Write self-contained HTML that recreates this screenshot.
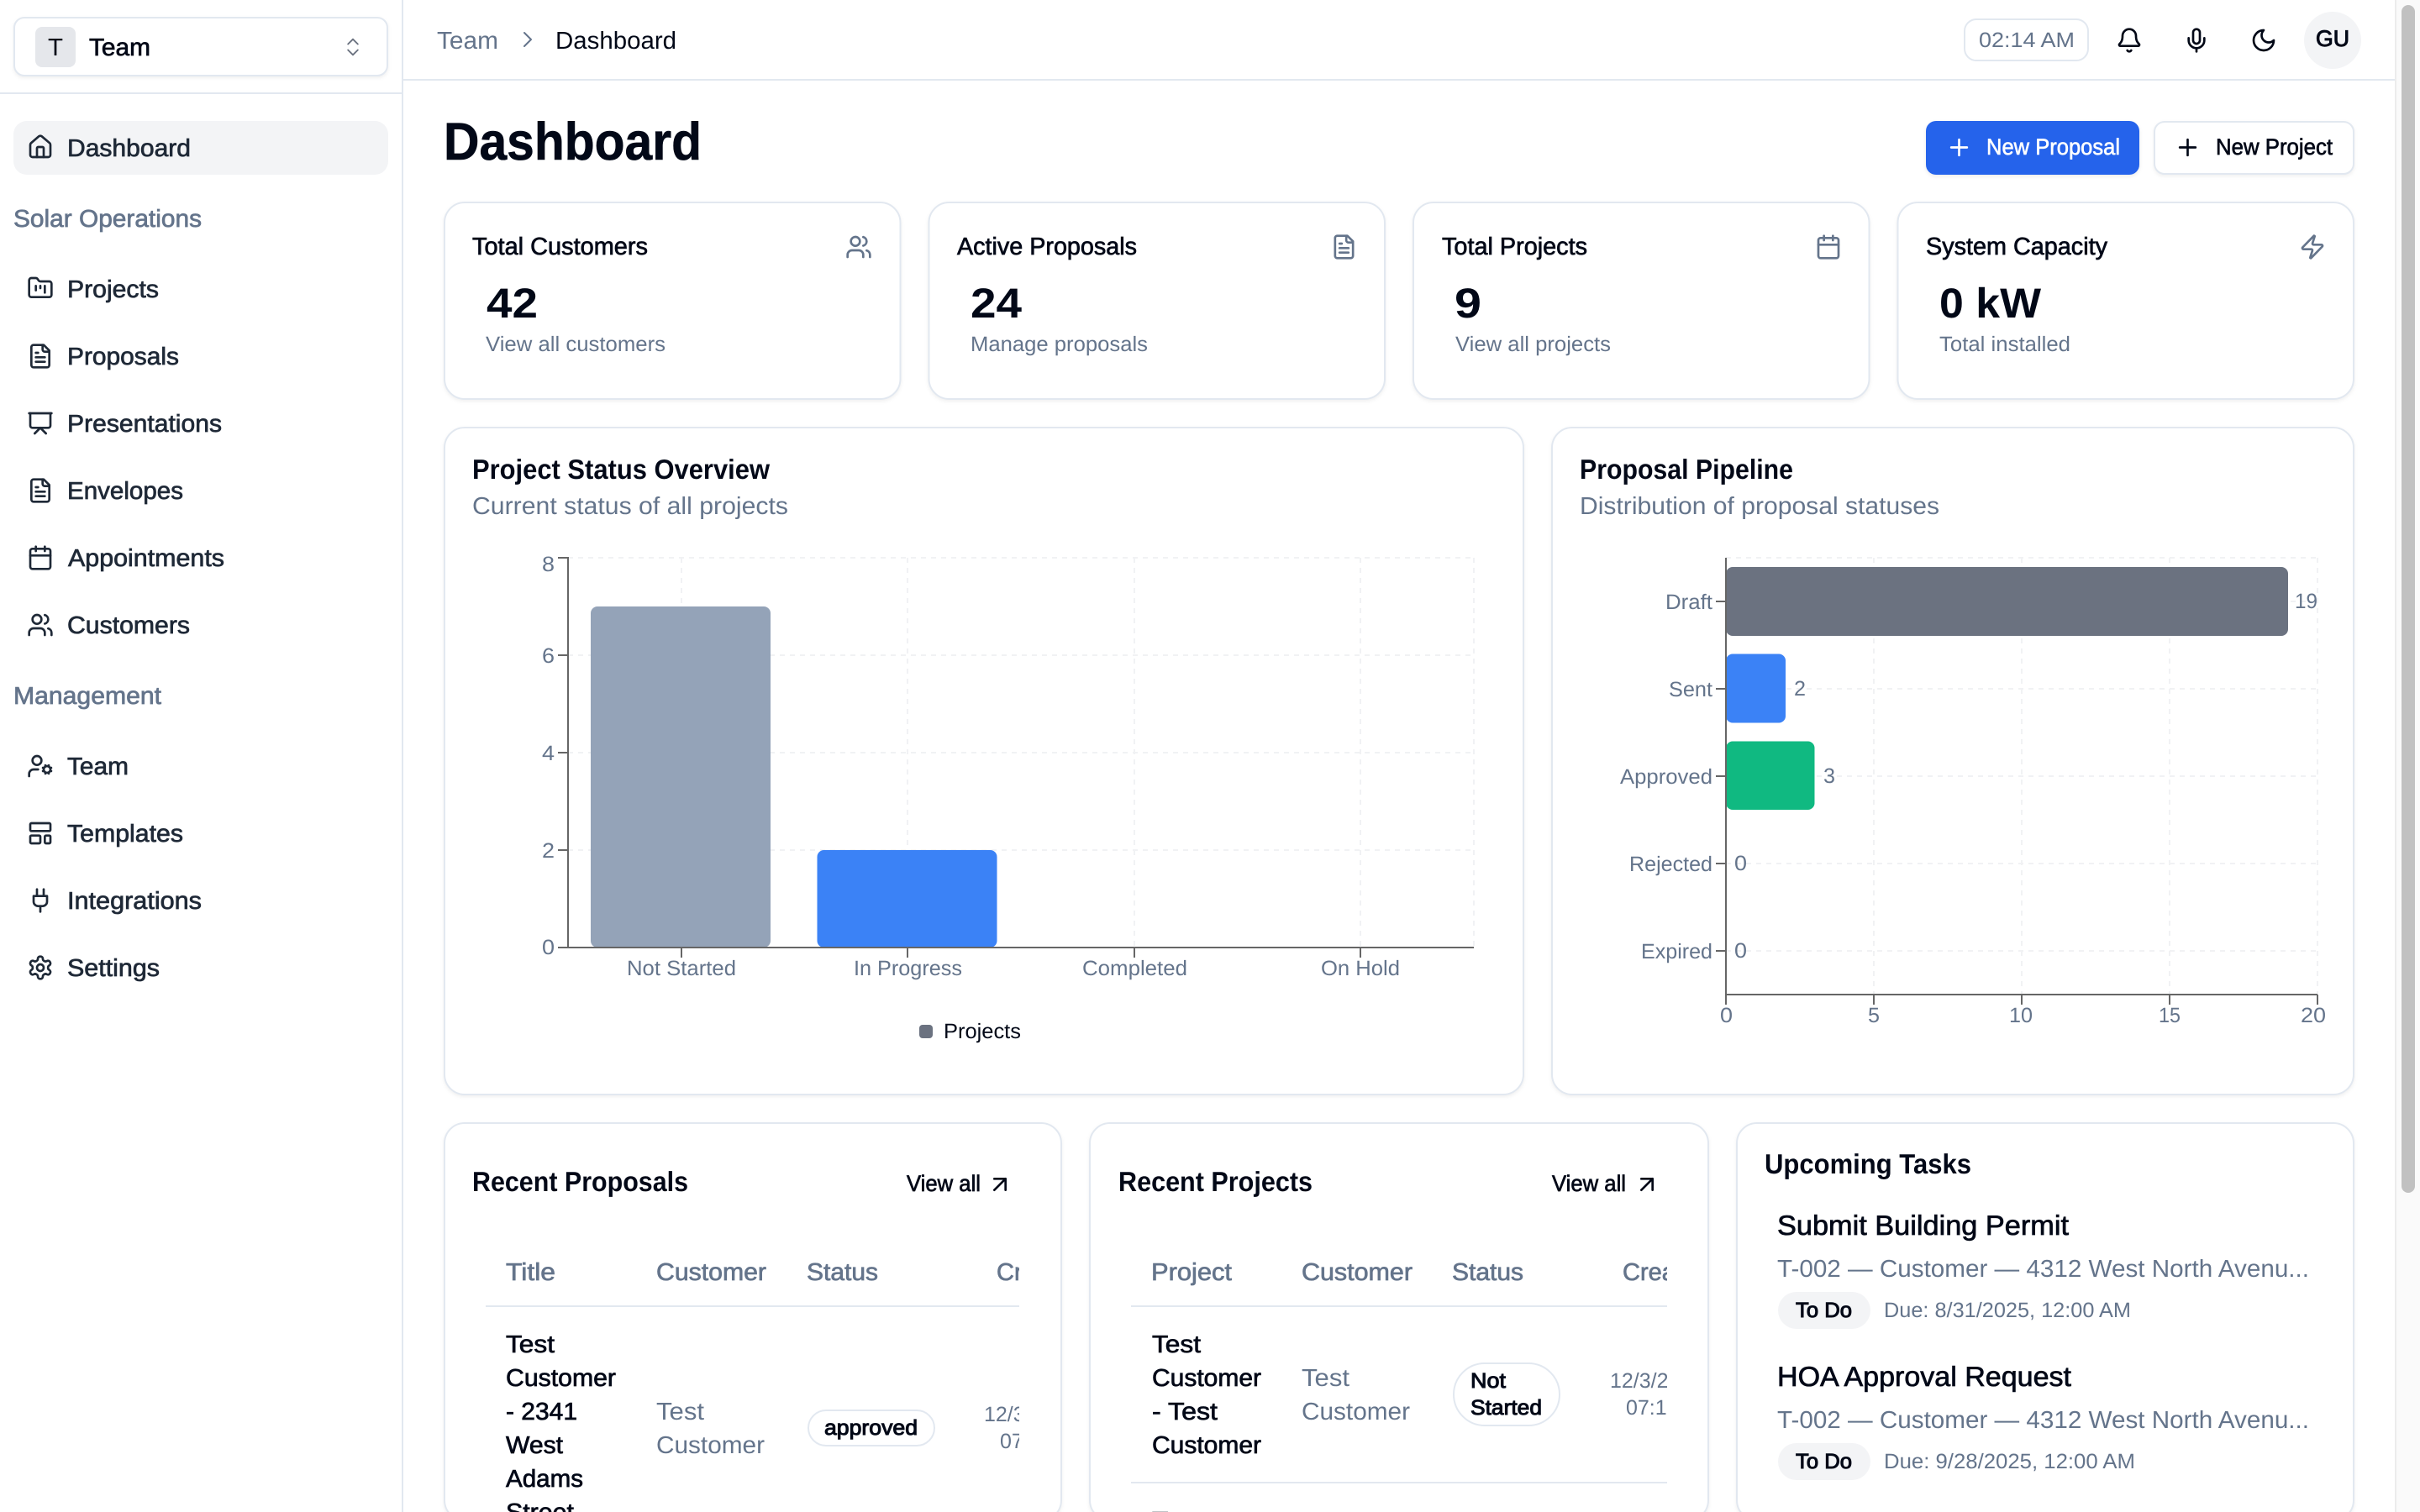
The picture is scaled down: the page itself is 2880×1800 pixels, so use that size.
<!DOCTYPE html>
<html lang="en"><head><meta charset="utf-8"><title>Dashboard</title>
<style>
html,body{margin:0;padding:0;background:#fff;width:2880px;height:1800px;overflow:hidden}
svg{display:block}
text{font-family:"Liberation Sans",sans-serif;text-rendering:geometricPrecision;white-space:pre}
.d{fill:#020817}.g{fill:#64748b}.n{fill:#1f2937}.w{fill:#fff}
.dm{fill:#020817;stroke:#020817;stroke-width:.7}
.ds{fill:#020817;stroke:#020817;stroke-width:1}
.gm{fill:#64748b;stroke:#64748b;stroke-width:.7}
.nm{fill:#1f2937;stroke:#1f2937;stroke-width:.7}
.wm{fill:#fff;stroke:#fff;stroke-width:.6}
.b{font-weight:700}
.s29{font-size:29px}.s25{font-size:25px}.s27{font-size:27px}.s33{font-size:33px}.s50{font-size:50px;font-weight:700}
.card{fill:#fff;stroke:#e2e8f0;stroke-width:2;filter:drop-shadow(0 2px 2px rgba(0,0,0,.06))}
.ln{fill:#e2e8f0}
.ax{stroke:#666;stroke-width:2;fill:none}
.gr{stroke:#f1f2f4;stroke-width:2;stroke-dasharray:6 6;fill:none}
.i{fill:none;stroke-linecap:round;stroke-linejoin:round;stroke-width:2}
.in{stroke:#1f2937;color:#1f2937}.ig{stroke:#64748b}.id{stroke:#020817}.iw{stroke:#fff}
</style></head><body>
<svg xmlns="http://www.w3.org/2000/svg" width="2880" height="1800" viewBox="0 0 2880 1800">
<defs>
<symbol id="home" viewBox="0 0 24 24"><path d="M15 21v-8a1 1 0 0 0-1-1h-4a1 1 0 0 0-1 1v8"/><path d="M3 10a2 2 0 0 1 .709-1.528l7-5.999a2 2 0 0 1 2.582 0l7 5.999A2 2 0 0 1 21 10v9a2 2 0 0 1-2 2H5a2 2 0 0 1-2-2z"/></symbol>
<symbol id="kanban" viewBox="0 0 24 24"><path d="M4 20h16a2 2 0 0 0 2-2V8a2 2 0 0 0-2-2h-7.930a2 2 0 0 1-1.660-.9l-.82-1.200A2 2 0 0 0 7.930 3H4a2 2 0 0 0-2 2v13c0 1.100.9 2 2 2Z"/><path d="M8 10v4"/><path d="M12 10v2"/><path d="M16 10v6"/></symbol>
<symbol id="file" viewBox="0 0 24 24"><path d="M15 2H6a2 2 0 0 0-2 2v16a2 2 0 0 0 2 2h12a2 2 0 0 0 2-2V7Z"/><path d="M14 2v4a2 2 0 0 0 2 2h4"/><path d="M10 9H8"/><path d="M16 13H8"/><path d="M16 17H8"/></symbol>
<symbol id="pres" viewBox="0 0 24 24"><path d="M2 3h20"/><path d="M21 3v11a2 2 0 0 1-2 2H5a2 2 0 0 1-2-2V3"/><path d="m7 21 5-5 5 5"/></symbol>
<symbol id="cal" viewBox="0 0 24 24"><path d="M8 2v4"/><path d="M16 2v4"/><rect width="18" height="18" x="3" y="4" rx="2"/><path d="M3 10h18"/></symbol>
<symbol id="users" viewBox="0 0 24 24"><path d="M16 21v-2a4 4 0 0 0-4-4H6a4 4 0 0 0-4 4v2"/><path d="M16 3.128a4 4 0 0 1 0 7.744"/><path d="M22 21v-2a4 4 0 0 0-3-3.870"/><circle cx="9" cy="7" r="4"/></symbol>
<symbol id="ucog" viewBox="0 0 24 24"><path d="M10 15H6a4 4 0 0 0-4 4v2"/><path d="m14.305 16.530.923-.382"/><path d="m15.228 13.852-.923-.383"/><path d="m16.852 12.228-.383-.923"/><path d="m16.852 17.772-.383.924"/><path d="m19.148 12.228.383-.923"/><path d="m19.530 18.696-.382-.924"/><path d="m20.772 13.852.924-.383"/><path d="m20.772 16.148.924.383"/><circle cx="18" cy="15" r="3"/><circle cx="9" cy="7" r="4"/></symbol>
<symbol id="tmpl" viewBox="0 0 24 24"><rect width="18" height="7" x="3" y="3" rx="1"/><rect width="9" height="7" x="3" y="14" rx="1"/><rect width="5" height="7" x="16" y="14" rx="1"/></symbol>
<symbol id="plug" viewBox="0 0 24 24"><path d="M12 22v-5"/><path d="M9 8V2"/><path d="M15 8V2"/><path d="M18 8v5a4 4 0 0 1-4 4h-4a4 4 0 0 1-4-4V8Z"/></symbol>
<symbol id="gear" viewBox="0 0 24 24"><path d="M12.220 2h-.44a2 2 0 0 0-2 2v.18a2 2 0 0 1-1 1.730l-.43.25a2 2 0 0 1-2 0l-.15-.08a2 2 0 0 0-2.730.73l-.22.38a2 2 0 0 0 .73 2.730l.15.1a2 2 0 0 1 1 1.720v.51a2 2 0 0 1-1 1.740l-.15.09a2 2 0 0 0-.73 2.730l.22.38a2 2 0 0 0 2.730.73l.15-.08a2 2 0 0 1 2 0l.43.25a2 2 0 0 1 1 1.730V20a2 2 0 0 0 2 2h.44a2 2 0 0 0 2-2v-.18a2 2 0 0 1 1-1.730l.43-.25a2 2 0 0 1 2 0l.15.08a2 2 0 0 0 2.730-.73l.22-.39a2 2 0 0 0-.73-2.730l-.15-.08a2 2 0 0 1-1-1.740v-.5a2 2 0 0 1 1-1.740l.15-.09a2 2 0 0 0 .73-2.730l-.22-.38a2 2 0 0 0-2.730-.73l-.15.08a2 2 0 0 1-2 0l-.43-.25a2 2 0 0 1-1-1.730V4a2 2 0 0 0-2-2z"/><circle cx="12" cy="12" r="3"/></symbol>
<symbol id="bell" viewBox="0 0 24 24"><path d="M10.268 21a2 2 0 0 0 3.464 0"/><path d="M3.262 15.326A1 1 0 0 0 4 17h16a1 1 0 0 0 .74-1.673C19.410 13.956 18 12.499 18 8A6 6 0 0 0 6 8c0 4.499-1.411 5.956-2.738 7.326"/></symbol>
<symbol id="mic" viewBox="0 0 24 24"><path d="M12 19v3"/><path d="M19 10v2a7 7 0 0 1-14 0v-2"/><rect x="9" y="2" width="6" height="13" rx="3"/></symbol>
<symbol id="moon" viewBox="0 0 24 24"><path d="M12 3a6 6 0 0 0 9 9 9 9 0 1 1-9-9Z"/></symbol>
<symbol id="zap" viewBox="0 0 24 24"><path d="M4 14a1 1 0 0 1-.78-1.630l9.900-10.200a.5.5 0 0 1 .86.46l-1.920 6.020A1 1 0 0 0 13 10h7a1 1 0 0 1 .78 1.630l-9.900 10.200a.5.5 0 0 1-.86-.46l1.920-6.020A1 1 0 0 0 11 14z"/></symbol>
<symbol id="plus" viewBox="0 0 24 24"><path d="M5 12h14"/><path d="M12 5v14"/></symbol>
<symbol id="aur" viewBox="0 0 24 24"><path d="M7 7h10v10"/><path d="M7 17 17 7"/></symbol>
<symbol id="chr" viewBox="0 0 24 24"><path d="m9 18 6-6-6-6"/></symbol>
<symbol id="chud" viewBox="0 0 24 24"><path d="m7 15 5 5 5-5"/><path d="m7 9 5-5 5 5"/></symbol>
<clipPath id="c1"><rect x="578" y="1490" width="635" height="310"/></clipPath>
<clipPath id="c2"><rect x="1346" y="1490" width="638" height="310"/></clipPath>
</defs>

<!-- scrollbar -->
<rect x="2850" y="0" width="30" height="1800" fill="#fafafa"/>
<rect x="2850" y="0" width="2" height="1800" fill="#ececec"/>
<rect x="2858" y="6" width="16" height="1414" rx="8" fill="#c1c1c1"/>

<!-- sidebar -->
<rect x="478" y="0" width="2" height="1800" fill="#e2e8f0"/>
<rect x="0" y="110" width="478" height="2" fill="#e2e8f0"/>
<rect class="card" x="17" y="21" width="444" height="69" rx="12"/>
<rect x="42" y="32" width="48" height="48" rx="8" fill="#e5e7eb"/>
<text class="s29 d" x="57" y="66" textLength="18" lengthAdjust="spacingAndGlyphs">T</text>
<text class="s29 dm" x="106" y="66" textLength="73" lengthAdjust="spacingAndGlyphs">Team</text>
<use href="#chud" x="406" y="42" width="28" height="28" class="i" stroke="#6b7280" style="stroke-width:1.600"/>

<rect x="16" y="144" width="446" height="64" rx="16" fill="#f3f4f6"/>
<use href="#home" x="32" y="159" width="32" height="32" class="i in"/>
<text class="s29 nm" x="80" y="186" textLength="147" lengthAdjust="spacingAndGlyphs">Dashboard</text>
<text class="s29 gm" x="16" y="270" textLength="224" lengthAdjust="spacingAndGlyphs">Solar Operations</text>

<use href="#kanban" x="32" y="327" width="32" height="32" class="i in"/>
<text class="s29 nm" x="80" y="354" textLength="109" lengthAdjust="spacingAndGlyphs">Projects</text>
<use href="#file" x="32" y="408" width="32" height="32" class="i in"/>
<text class="s29 nm" x="80" y="434" textLength="133" lengthAdjust="spacingAndGlyphs">Proposals</text>
<use href="#pres" x="32" y="488" width="32" height="32" class="i in"/>
<text class="s29 nm" x="80" y="514" textLength="184" lengthAdjust="spacingAndGlyphs">Presentations</text>
<use href="#file" x="32" y="568" width="32" height="32" class="i in"/>
<text class="s29 nm" x="80" y="594" textLength="138" lengthAdjust="spacingAndGlyphs">Envelopes</text>
<use href="#cal" x="32" y="648" width="32" height="32" class="i in"/>
<text class="s29 nm" x="81" y="674" textLength="186" lengthAdjust="spacingAndGlyphs">Appointments</text>
<use href="#users" x="32" y="728" width="32" height="32" class="i in"/>
<text class="s29 nm" x="80" y="754" textLength="146" lengthAdjust="spacingAndGlyphs">Customers</text>
<text class="s29 gm" x="16" y="838" textLength="176" lengthAdjust="spacingAndGlyphs">Management</text>
<use href="#ucog" x="32" y="896" width="32" height="32" class="i in"/>
<text class="s29 nm" x="80" y="922" textLength="73" lengthAdjust="spacingAndGlyphs">Team</text>
<use href="#tmpl" x="32" y="976" width="32" height="32" class="i in"/>
<text class="s29 nm" x="80" y="1002" textLength="138" lengthAdjust="spacingAndGlyphs">Templates</text>
<use href="#plug" x="32" y="1056" width="32" height="32" class="i in"/>
<text class="s29 nm" x="80" y="1082" textLength="160" lengthAdjust="spacingAndGlyphs">Integrations</text>
<use href="#gear" x="32" y="1136" width="32" height="32" class="i in"/>
<text class="s29 nm" x="80" y="1162" textLength="110" lengthAdjust="spacingAndGlyphs">Settings</text>

<!-- header -->
<rect x="480" y="94" width="2370" height="2" fill="#e2e8f0"/>
<text class="s29 g" x="520" y="58" textLength="73" lengthAdjust="spacingAndGlyphs">Team</text>
<use href="#chr" x="612" y="31" width="32" height="32" class="i ig" style="stroke-width:1.500"/>
<text class="s29 d" x="661" y="58" textLength="144" lengthAdjust="spacingAndGlyphs">Dashboard</text>
<rect x="2338" y="23" width="147" height="49" rx="14" fill="#fff" stroke="#e2e8f0" stroke-width="2"/>
<text class="s25 g" x="2355" y="56" textLength="114" lengthAdjust="spacingAndGlyphs">02:14 AM</text>
<use href="#bell" x="2518" y="32" width="32" height="32" class="i id"/>
<use href="#mic" x="2598" y="32" width="32" height="32" class="i id"/>
<use href="#moon" x="2678" y="32" width="32" height="32" class="i id"/>
<circle cx="2776" cy="48" r="34" fill="#f3f4f6"/>
<text class="s27 ds" x="2756" y="55" textLength="40" lengthAdjust="spacingAndGlyphs">GU</text>

<!-- title row -->
<text class="d b" font-size="63" x="528" y="190" textLength="307" lengthAdjust="spacingAndGlyphs" stroke="#020817" stroke-width=".6">Dashboard</text>
<rect x="2292" y="144" width="254" height="64" rx="12" fill="#2563eb" style="filter:drop-shadow(0 2px 2px rgba(0,0,0,.08))"/>
<use href="#plus" x="2315.500" y="159.500" width="32" height="32" class="i iw"/>
<text class="s27 wm" x="2364" y="184" textLength="159" lengthAdjust="spacingAndGlyphs">New Proposal</text>
<rect class="card" x="2564" y="145" width="237" height="62" rx="12"/>
<use href="#plus" x="2587.500" y="159.500" width="32" height="32" class="i id"/>
<text class="s27 dm" x="2637" y="184" textLength="139" lengthAdjust="spacingAndGlyphs">New Project</text>

<!-- stat cards -->
<rect class="card" x="529" y="241" width="542.500" height="234" rx="24"/>
<text class="s29 dm" x="562" y="303" textLength="209" lengthAdjust="spacingAndGlyphs">Total Customers</text>
<use href="#users" x="1006" y="278" width="32" height="32" class="i ig"/>
<text class="s50 d" x="579" y="378" textLength="61" lengthAdjust="spacingAndGlyphs">42</text>
<text class="s25 g" x="578" y="418" textLength="214" lengthAdjust="spacingAndGlyphs">View all customers</text>

<rect class="card" x="1105.500" y="241" width="542.500" height="234" rx="24"/>
<text class="s29 dm" x="1139" y="303" textLength="214" lengthAdjust="spacingAndGlyphs">Active Proposals</text>
<use href="#file" x="1583.500" y="278" width="32" height="32" class="i ig"/>
<text class="s50 d" x="1155" y="378" textLength="61" lengthAdjust="spacingAndGlyphs">24</text>
<text class="s25 g" x="1155" y="418" textLength="211" lengthAdjust="spacingAndGlyphs">Manage proposals</text>

<rect class="card" x="1682" y="241" width="542.500" height="234" rx="24"/>
<text class="s29 dm" x="1716" y="303" textLength="173" lengthAdjust="spacingAndGlyphs">Total Projects</text>
<use href="#cal" x="2160" y="278" width="32" height="32" class="i ig"/>
<text class="s50 d" x="1731" y="378" textLength="32" lengthAdjust="spacingAndGlyphs">9</text>
<text class="s25 g" x="1732" y="418" textLength="185" lengthAdjust="spacingAndGlyphs">View all projects</text>

<rect class="card" x="2258.500" y="241" width="542.500" height="234" rx="24"/>
<text class="s29 dm" x="2292" y="303" textLength="216" lengthAdjust="spacingAndGlyphs">System Capacity</text>
<use href="#zap" x="2736" y="278" width="32" height="32" class="i ig"/>
<text class="s50 d" x="2308" y="378" textLength="121" lengthAdjust="spacingAndGlyphs">0 kW</text>
<text class="s25 g" x="2308" y="418" textLength="156" lengthAdjust="spacingAndGlyphs">Total installed</text>

<!-- chart card 1 -->
<rect class="card" x="529" y="509" width="1284" height="794" rx="24"/>
<text class="s33 d b" x="562" y="570" textLength="354" lengthAdjust="spacingAndGlyphs">Project Status Overview</text>
<text class="s29 g" x="562" y="612" textLength="376" lengthAdjust="spacingAndGlyphs">Current status of all projects</text>
<path class="gr" d="M676 664H1754M676 780H1754M676 896H1754M676 1012H1754M811 664V1128M1080 664V1128M1350 664V1128M1619 664V1128M1754 664V1128"/>
<rect x="703" y="722" width="214" height="406" rx="8" fill="#94a3b8"/>
<rect x="972.500" y="1012" width="214" height="116" rx="8" fill="#3b82f6"/>
<path class="ax" d="M676 663V1128M664 664H676M664 780H676M664 896H676M664 1012H676M664 1128H1754M811 1128V1140M1080 1128V1140M1350 1128V1140M1619 1128V1140"/>
<text class="s25 g" x="645" y="680" textLength="15" lengthAdjust="spacingAndGlyphs">8</text>
<text class="s25 g" x="645" y="789" textLength="15" lengthAdjust="spacingAndGlyphs">6</text>
<text class="s25 g" x="645" y="905" textLength="15" lengthAdjust="spacingAndGlyphs">4</text>
<text class="s25 g" x="645" y="1021" textLength="15" lengthAdjust="spacingAndGlyphs">2</text>
<text class="s25 g" x="645" y="1136" textLength="15" lengthAdjust="spacingAndGlyphs">0</text>
<text class="s25 g" x="746" y="1161" textLength="130" lengthAdjust="spacingAndGlyphs">Not Started</text>
<text class="s25 g" x="1016" y="1161" textLength="129" lengthAdjust="spacingAndGlyphs">In Progress</text>
<text class="s25 g" x="1288" y="1161" textLength="125" lengthAdjust="spacingAndGlyphs">Completed</text>
<text class="s25 g" x="1572" y="1161" textLength="94" lengthAdjust="spacingAndGlyphs">On Hold</text>
<rect x="1094" y="1220" width="16" height="16" rx="4" fill="#6b7280"/>
<text class="s25 d" x="1123" y="1236" textLength="92" lengthAdjust="spacingAndGlyphs">Projects</text>

<!-- chart card 2 -->
<rect class="card" x="1847" y="509" width="954" height="794" rx="24"/>
<text class="s33 d b" x="1880" y="570" textLength="254" lengthAdjust="spacingAndGlyphs">Proposal Pipeline</text>
<text class="s29 g" x="1880" y="612" textLength="428" lengthAdjust="spacingAndGlyphs">Distribution of proposal statuses</text>
<path class="gr" d="M2054 664H2758M2054 716H2758M2054 820H2758M2054 924H2758M2054 1028H2758M2054 1132H2758M2230 664V1183M2406 664V1183M2582 664V1183M2758 664V1183"/>
<rect x="2054" y="675" width="669" height="82" rx="8" fill="#6b7280"/>
<rect x="2054" y="778.500" width="71" height="82" rx="8" fill="#3b82f6"/>
<rect x="2054" y="882.500" width="105.500" height="81.500" rx="8" fill="#10b981"/>
<path class="ax" d="M2054 664V1184M2042 716H2054M2042 820H2054M2042 924H2054M2042 1028H2054M2042 1132H2054M2053 1184H2758M2054 1184V1196M2230 1184V1196M2406 1184V1196M2582 1184V1196M2758 1184V1196"/>
<text class="s25 g" x="1982" y="725" textLength="56" lengthAdjust="spacingAndGlyphs">Draft</text>
<text class="s25 g" x="1986" y="829" textLength="52" lengthAdjust="spacingAndGlyphs">Sent</text>
<text class="s25 g" x="1928" y="933" textLength="110" lengthAdjust="spacingAndGlyphs">Approved</text>
<text class="s25 g" x="1939" y="1037" textLength="99" lengthAdjust="spacingAndGlyphs">Rejected</text>
<text class="s25 g" x="1953" y="1141" textLength="85" lengthAdjust="spacingAndGlyphs">Expired</text>
<text class="s25 g" x="2731" y="724" textLength="27" lengthAdjust="spacingAndGlyphs">19</text>
<text class="s25 g" x="2135" y="828" textLength="14" lengthAdjust="spacingAndGlyphs">2</text>
<text class="s25 g" x="2170" y="932" textLength="14" lengthAdjust="spacingAndGlyphs">3</text>
<text class="s25 g" x="2064" y="1036" textLength="15" lengthAdjust="spacingAndGlyphs">0</text>
<text class="s25 g" x="2064" y="1140" textLength="15" lengthAdjust="spacingAndGlyphs">0</text>
<text class="s25 g" x="2047" y="1217" textLength="15" lengthAdjust="spacingAndGlyphs">0</text>
<text class="s25 g" x="2223" y="1217" textLength="14" lengthAdjust="spacingAndGlyphs">5</text>
<text class="s25 g" x="2391" y="1217" textLength="28" lengthAdjust="spacingAndGlyphs">10</text>
<text class="s25 g" x="2569" y="1217" textLength="26" lengthAdjust="spacingAndGlyphs">15</text>
<text class="s25 g" x="2738" y="1217" textLength="30" lengthAdjust="spacingAndGlyphs">20</text>

<!-- recent proposals -->
<rect class="card" x="529" y="1337" width="734" height="473" rx="24"/>
<text class="s33 d b" x="562" y="1418" textLength="257" lengthAdjust="spacingAndGlyphs">Recent Proposals</text>
<text class="s27 dm" x="1079" y="1418" textLength="88" lengthAdjust="spacingAndGlyphs">View all</text>
<use href="#aur" x="1174" y="1394" width="32" height="32" class="i id"/>
<g clip-path="url(#c1)">
<text class="s29 gm" x="602" y="1524" textLength="59" lengthAdjust="spacingAndGlyphs">Title</text>
<text class="s29 gm" x="781" y="1524" textLength="131" lengthAdjust="spacingAndGlyphs">Customer</text>
<text class="s29 gm" x="960" y="1524" textLength="85" lengthAdjust="spacingAndGlyphs">Status</text>
<text class="s29 gm" x="1186" y="1524">Created</text>
<rect class="ln" x="578" y="1554" width="635" height="2"/>
<text class="s29 dm" x="602" y="1610" textLength="58" lengthAdjust="spacingAndGlyphs">Test</text>
<text class="s29 dm" x="602" y="1650" textLength="131" lengthAdjust="spacingAndGlyphs">Customer</text>
<text class="s29 dm" x="602" y="1690" textLength="85" lengthAdjust="spacingAndGlyphs">- 2341</text>
<text class="s29 dm" x="602" y="1730" textLength="68" lengthAdjust="spacingAndGlyphs">West</text>
<text class="s29 dm" x="602" y="1770" textLength="92" lengthAdjust="spacingAndGlyphs">Adams</text>
<text class="s29 dm" x="602" y="1810" textLength="81" lengthAdjust="spacingAndGlyphs">Street</text>
<text class="s29 g" x="781" y="1690" textLength="57" lengthAdjust="spacingAndGlyphs">Test</text>
<text class="s29 g" x="781" y="1730" textLength="129" lengthAdjust="spacingAndGlyphs">Customer</text>
<rect x="962" y="1679" width="150" height="42" rx="21" fill="#fff" stroke="#e2e8f0" stroke-width="2"/>
<text class="s25 ds" x="981" y="1708" textLength="111" lengthAdjust="spacingAndGlyphs">approved</text>
<text class="s25 g" x="1171" y="1692">12/3/2025,</text>
<text class="s25 g" x="1190" y="1724">07:12 AM</text>
</g>

<!-- recent projects -->
<rect class="card" x="1297" y="1337" width="736" height="473" rx="24"/>
<text class="s33 d b" x="1331" y="1418" textLength="231" lengthAdjust="spacingAndGlyphs">Recent Projects</text>
<text class="s27 dm" x="1847" y="1418" textLength="88" lengthAdjust="spacingAndGlyphs">View all</text>
<use href="#aur" x="1944" y="1394" width="32" height="32" class="i id"/>
<g clip-path="url(#c2)">
<text class="s29 gm" x="1370" y="1524" textLength="96" lengthAdjust="spacingAndGlyphs">Project</text>
<text class="s29 gm" x="1549" y="1524" textLength="132" lengthAdjust="spacingAndGlyphs">Customer</text>
<text class="s29 gm" x="1728" y="1524" textLength="85" lengthAdjust="spacingAndGlyphs">Status</text>
<text class="s29 gm" x="1931" y="1524">Created</text>
<rect class="ln" x="1346" y="1554" width="638" height="2"/>
<text class="s29 dm" x="1371" y="1610" textLength="58" lengthAdjust="spacingAndGlyphs">Test</text>
<text class="s29 dm" x="1371" y="1650" textLength="130" lengthAdjust="spacingAndGlyphs">Customer</text>
<text class="s29 dm" x="1371" y="1690" textLength="78" lengthAdjust="spacingAndGlyphs">- Test</text>
<text class="s29 dm" x="1371" y="1730" textLength="130" lengthAdjust="spacingAndGlyphs">Customer</text>
<text class="s29 g" x="1549" y="1650" textLength="57" lengthAdjust="spacingAndGlyphs">Test</text>
<text class="s29 g" x="1549" y="1690" textLength="129" lengthAdjust="spacingAndGlyphs">Customer</text>
<rect x="1730" y="1623" width="126" height="74" rx="37" fill="#fff" stroke="#e2e8f0" stroke-width="2"/>
<text class="s25 ds" x="1750" y="1652" textLength="42" lengthAdjust="spacingAndGlyphs">Not</text>
<text class="s25 ds" x="1750" y="1684" textLength="85" lengthAdjust="spacingAndGlyphs">Started</text>
<text class="s25 g" x="1916" y="1652">12/3/2025,</text>
<text class="s25 g" x="1935" y="1684">07:12 AM</text>
<rect class="ln" x="1346" y="1764" width="638" height="2"/>
<text class="s29 dm" x="1371" y="1820" textLength="58" lengthAdjust="spacingAndGlyphs">Test</text>
</g>

<!-- upcoming tasks -->
<rect class="card" x="2067" y="1337" width="734" height="473" rx="24"/>
<text class="s33 d b" x="2100" y="1397" textLength="246" lengthAdjust="spacingAndGlyphs">Upcoming Tasks</text>
<text class="s33 dm" x="2115" y="1470" textLength="347" lengthAdjust="spacingAndGlyphs">Submit Building Permit</text>
<text class="s29 g" x="2115" y="1520" textLength="633" lengthAdjust="spacingAndGlyphs">T-002 — Customer — 4312 West North Avenu...</text>
<rect x="2116" y="1538" width="110" height="44" rx="22" fill="#f3f4f6"/>
<text class="s25 ds" x="2137" y="1568" textLength="67" lengthAdjust="spacingAndGlyphs">To Do</text>
<text class="s25 g" x="2242" y="1568" textLength="294" lengthAdjust="spacingAndGlyphs">Due: 8/31/2025, 12:00 AM</text>
<text class="s33 dm" x="2115" y="1650" textLength="350" lengthAdjust="spacingAndGlyphs">HOA Approval Request</text>
<text class="s29 g" x="2115" y="1700" textLength="633" lengthAdjust="spacingAndGlyphs">T-002 — Customer — 4312 West North Avenu...</text>
<rect x="2116" y="1718" width="110" height="44" rx="22" fill="#f3f4f6"/>
<text class="s25 ds" x="2137" y="1748" textLength="67" lengthAdjust="spacingAndGlyphs">To Do</text>
<text class="s25 g" x="2242" y="1748" textLength="299" lengthAdjust="spacingAndGlyphs">Due: 9/28/2025, 12:00 AM</text>
</svg>
</body></html>
